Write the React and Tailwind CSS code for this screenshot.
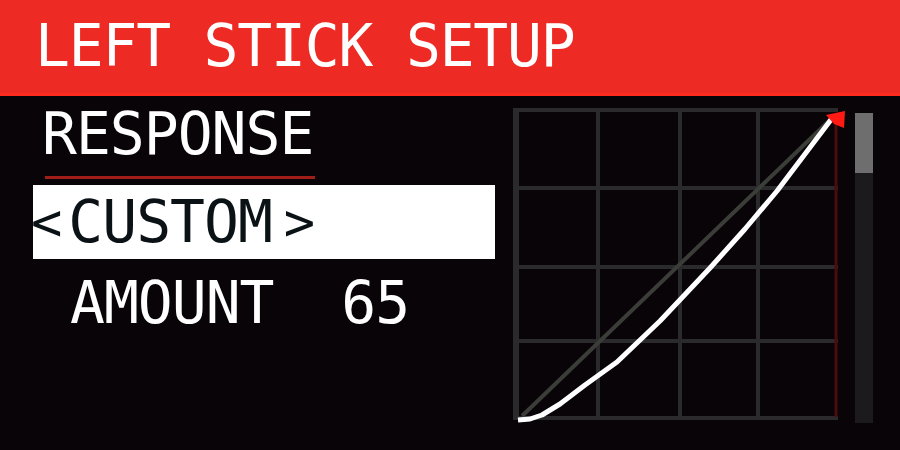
// App.jsx — stick setup screen
const pts = [
  [518, 420],
  [530, 419],
  [542, 415],
  [560, 404],
  [585, 385],
  [617, 362],
  [660, 321],
  [710, 268],
  [745, 229],
  [777, 191],
  [805, 154],
  [833, 117],
]
  .map(([x, y]) => `${x},${y}`)
  .join(" ");

const mono = { fontFamily: '"DejaVu Sans Mono", "Liberation Mono", monospace' };

const Chart = () => (
  <svg width="335" height="320" viewBox="510 105 335 320" className="shrink-0">
    {/* grid */}
    {[598, 680, 758].map((x) => (
      <line key={x} x1={x} y1="110" x2={x} y2="419" stroke="#2a292b" strokeWidth="4" />
    ))}
    {[110, 188, 267, 341, 418].map((y) => (
      <line key={y} x1="513" y1={y} x2="838" y2={y} stroke="#2a292b" strokeWidth="4" />
    ))}
    <line x1="516" y1="108" x2="516" y2="420" stroke="#2a292b" strokeWidth="6" />
    <line x1="836" y1="114" x2="836" y2="417" stroke="#4a0c0e" strokeWidth="3" />
    {/* linear reference */}
    <line x1="522" y1="416" x2="833" y2="117" stroke="#3b3d39" strokeWidth="4" />
    {/* response curve */}
    <polyline points={pts} fill="none" stroke="#ffffff" strokeWidth="5" strokeLinejoin="round" />
    <polygon points="826,115 845,111 844,128 834,124" fill="#ff1a14" />
  </svg>
);

export default function App() {
  return (
    <div className="w-[900px] h-[450px] bg-[#090407] flex flex-col overflow-hidden" style={mono}>
      {/* header */}
      <div className="h-[96px] bg-[#ee2a24] border-b-[3px] border-[#ff2b1f] flex items-center pl-[35px]">
        <span className="text-white text-[58px] leading-none tracking-[-1.2px] mt-[-2px]">LEFT STICK SETUP</span>
      </div>

      <div className="flex pt-[9px]">
        {/* left menu */}
        <div className="w-[510px] flex flex-col pl-[33px]">
          <div className="pl-[9px]">
            <div className="text-white text-[58px] leading-none tracking-[-1px]">RESPONSE</div>
            <div className="w-[270px] h-[3px] bg-[#a11d18] mt-[13px] ml-[3px]" />
          </div>
          <div className="w-[462px] h-[74px] bg-white mt-[6px] flex items-center text-[#0b1216] text-[58px] leading-none">
            <span className="ml-[-2px] text-[52px]">&lt;</span>
            <span className="ml-[6px] tracking-[-1px]">CUSTOM</span>
            <span className="ml-[12px] text-[52px]">&gt;</span>
          </div>
          <div className="text-white text-[58px] leading-none tracking-[-1px] mt-[15px] pl-[37px] whitespace-pre">
            AMOUNT  65
          </div>
        </div>

        {/* chart + scrollbar */}
        <Chart />
        <div className="ml-[10px] mt-[8px] w-[18px] h-[310px] bg-[#1c1a1c]">
          <div className="h-[60px] bg-[#6e6e6e]" />
        </div>
      </div>
    </div>
  );
}
